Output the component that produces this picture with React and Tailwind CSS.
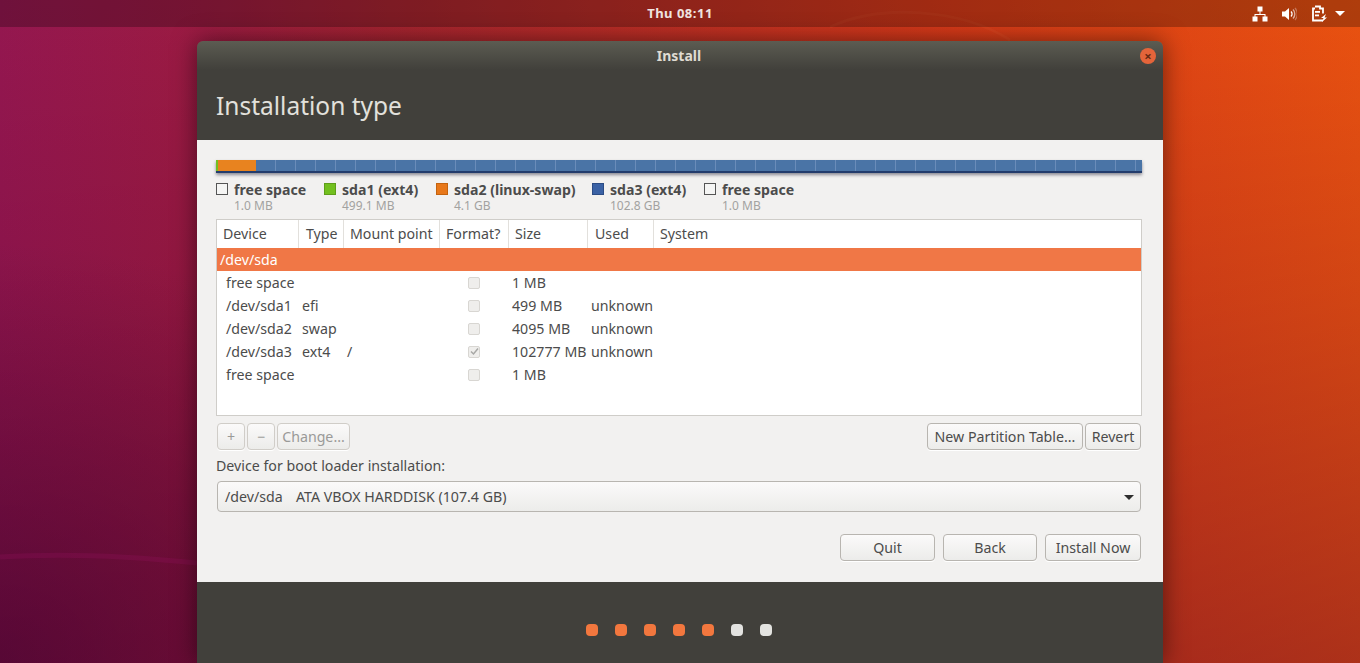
const legend = [
  { name: "free space", size: "1.0 MB", box: "bg-[#f5f5f4] border-[#555]", width: "w-[108px]" },
  { name: "sda1 (ext4)", size: "499.1 MB", box: "bg-[#73c01f] border-[#5f9e1a]", width: "w-[112px]" },
  { name: "sda2 (linux-swap)", size: "4.1 GB", box: "bg-[#e8781a] border-[#c4630f]", width: "w-[156px]" },
  { name: "sda3 (ext4)", size: "102.8 GB", box: "bg-[#3b62a5] border-[#2c4c85]", width: "w-[112px]" },
  { name: "free space", size: "1.0 MB", box: "bg-[#f5f5f4] border-[#555]", width: "w-[108px]" },
];

const columns = [
  { label: "Device", cls: "w-[82px] pl-[6px]" },
  { label: "Type", cls: "w-[45px] pl-[7px]" },
  { label: "Mount point", cls: "w-[96px] pl-[6px]" },
  { label: "Format?", cls: "w-[69px] pl-[6px]" },
  { label: "Size", cls: "w-[79px] pl-[6px]" },
  { label: "Used", cls: "w-[66px] pl-[7px]" },
  { label: "System", cls: "flex-1 pl-[6px]" },
];

const rows = [
  { device: "free space", size: "1 MB" },
  { device: "/dev/sda1", type: "efi", size: "499 MB", used: "unknown" },
  { device: "/dev/sda2", type: "swap", size: "4095 MB", used: "unknown" },
  { device: "/dev/sda3", type: "ext4", mount: "/", checked: true, size: "102777 MB", used: "unknown" },
  { device: "free space", size: "1 MB" },
];

function Btn({ children, className = "", disabled }) {
  return (
    <button
      className={`h-[27px] rounded-[4px] border border-[#b8b5b0] bg-gradient-to-b from-[#fbfafa] to-[#ececea] pt-[1px] text-[14.2px] leading-none shadow-[0_1px_0_#ffffff] ${
        disabled ? "border-[#d0cdc8] text-[#9a9a98]" : "text-[#4c4c4c]"
      } ${className}`}
    >
      {children}
    </button>
  );
}

function TopIcons() {
  return (
    <div className="flex items-center text-white">
      <svg width="16" height="16" viewBox="0 0 16 16" className="mr-[13px]" fill="#fff">
        <rect x="5.5" y="0.5" width="5" height="5" />
        <rect x="0.5" y="10.5" width="5" height="5" />
        <rect x="10.5" y="10.5" width="5" height="5" />
        <path d="M7.5 5h1v3H13.5v3h-1V9h-9v2h-1V8h5z" />
      </svg>
      <svg width="16" height="16" viewBox="0 0 16 16" className="mr-[14px]" fill="none">
        <path d="M1 5.5h3L8 2v12L4 10.5H1z" fill="#fff" />
        <path d="M10 5.5a3.5 3.5 0 0 1 0 5" stroke="#fff" strokeWidth="1.3" />
        <path d="M12 3.5a6.5 6.5 0 0 1 0 9" stroke="#fff" strokeOpacity="0.6" strokeWidth="1.3" />
        <path d="M14 2a9 9 0 0 1 0 12" stroke="#fff" strokeOpacity="0.3" strokeWidth="1.2" />
      </svg>
      <svg width="16" height="18" viewBox="0 0 16 18" className="mr-[8px]" fill="none">
        <path d="M4 1.5h5v2h3v5M12 15.5H2v-12h2" stroke="#fff" strokeWidth="1.8" />
        <rect x="4" y="6" width="5" height="1.8" fill="#fff" />
        <rect x="4" y="9.5" width="4" height="1.8" fill="#fff" />
        <path d="M10 13l5-4-1.5 3.5H16L11 17l1.5-4z" fill="#fff" />
      </svg>
      <span className="h-0 w-0 border-x-[5px] border-t-[5px] border-x-transparent border-t-white" />
    </div>
  );
}

export default function App() {
  return (
    <div className="relative flex h-[663px] w-[1360px] flex-col overflow-hidden bg-[radial-gradient(ellipse_520px_420px_at_0px_663px,rgba(45,0,40,0.45),rgba(45,0,40,0)),linear-gradient(180deg,rgba(80,0,40,0)_0%,rgba(80,0,40,0.16)_45%,rgba(80,0,40,0.4)_100%),linear-gradient(90deg,#951750_0%,#9c1b42_15%,#a8252f_30%,#d83a18_70%,#ea5210_100%)] font-['Noto_Sans',sans-serif]">
      {/* faint wave lines of the wallpaper */}
      <svg className="absolute inset-0" width="1360" height="663" fill="none">
        <path d="M0 557C60 553 130 556 197 563" stroke="#8f1058" strokeOpacity="0.3" strokeWidth="5" />
        <path d="M830 27C880 4 960 8 1010 40" stroke="#e8653a" strokeOpacity="0.15" strokeWidth="3" />
      </svg>

      <div className="relative flex h-[27px] shrink-0 items-center justify-between bg-black/25 pr-[15px] pl-[600px]">
        <span className="w-[160px] text-center text-[13px] font-bold tracking-[0.5px] text-[#f0e4e0]">Thu 08:11</span>
        <TopIcons />
      </div>

      <div className="relative flex flex-1 pt-[14px] pl-[197px]">
        <div className="flex w-[966px] flex-col rounded-t-[6px] shadow-[0_0_24px_rgba(0,0,0,0.5)]">
          <div className="relative flex h-[29px] shrink-0 items-center justify-center rounded-t-[6px] bg-gradient-to-b from-[#5c5c52] to-[#41403b] pr-[2px] text-[14px] font-bold text-[#dfdbd2]">
            Install
            <span className="absolute top-[7px] right-[7px] flex h-[16px] w-[16px] items-center justify-center rounded-full bg-[#e4643a] text-[13px] leading-none font-bold text-[#6a2a12]">
              ×
            </span>
          </div>

          <div className="flex h-[70px] shrink-0 items-center bg-[#41403b] pt-[3px] pl-[19px] text-[24.5px] text-[#e2e1dc]">
            Installation type
          </div>

          <div className="flex h-[442px] shrink-0 flex-col bg-[#f2f1f0] pt-[20px] pr-[21px] pl-[19px]">
            <div className="flex h-[13px] overflow-hidden border-b-2 border-[#233c6c] bg-[repeating-linear-gradient(90deg,#4a74a6_0px,#4a74a6_19px,#6a8cb9_19px,#6a8cb9_20px)] shadow-[0_2px_3px_rgba(40,40,60,0.5)]">
              <div className="w-[2px] bg-[#73c01f]" />
              <div className="w-[38px] bg-[#e8831f]" />
            </div>

            <div className="mt-[8px] flex">
              {legend.map((item, i) => (
                <div key={i} className={`flex ${item.width}`}>
                  <span className={`mt-[2px] h-[12px] w-[12px] border ${item.box}`} />
                  <div className="ml-[6px] leading-none">
                    <div className="h-[17px] text-[14.1px] leading-[17px] font-bold whitespace-nowrap text-[#4c4c4c]">{item.name}</div>
                    <div className="text-[12px] leading-[15px] text-[#a2a2a0]">{item.size}</div>
                  </div>
                </div>
              ))}
            </div>

            <div className="mt-[6px] flex h-[197px] shrink-0 flex-col border border-[#cfcdc9] bg-white text-[14.2px] text-[#4c4c4c]">
              <div className="flex h-[28px] shrink-0 items-center">
                {columns.map((col) => (
                  <div key={col.label} className={`flex h-full items-center border-r border-[#e2e0dc] last:border-r-0 ${col.cls}`}>
                    {col.label}
                  </div>
                ))}
              </div>
              <div className="flex h-[23px] shrink-0 items-center bg-[#f07746] pl-[3px] text-white">/dev/sda</div>
              {rows.map((row, i) => (
                <div key={i} className="flex h-[23px] shrink-0 items-center">
                  <div className="w-[85px] pl-[9px] whitespace-nowrap">{row.device}</div>
                  <div className="w-[45px]">{row.type}</div>
                  <div className="w-[121px]">{row.mount}</div>
                  <div className="w-[44px]">
                    <span className="flex h-[12px] w-[12px] items-center justify-center rounded-[2px] border border-[#d8d6d2] bg-[#efeeec]">
                      {row.checked && (
                        <svg width="9" height="9" viewBox="0 0 9 9" fill="none">
                          <path d="M1 4.5l2.5 2.5L8 1.5" stroke="#a8a8a6" strokeWidth="1.5" />
                        </svg>
                      )}
                    </span>
                  </div>
                  <div className="w-[79px] whitespace-nowrap">{row.size}</div>
                  <div>{row.used}</div>
                </div>
              ))}
            </div>

            <div className="mt-[7px] flex pl-px">
              <Btn disabled className="w-[28px] text-[#8c8c8a]">+</Btn>
              <Btn disabled className="ml-[2px] w-[28px] text-[#8c8c8a]">−</Btn>
              <Btn disabled className="ml-[2px] w-[73px]">Change...</Btn>
              <Btn className="ml-auto w-[156px] whitespace-nowrap">New Partition Table...</Btn>
              <Btn className="mr-px ml-[2px] w-[56px]">Revert</Btn>
            </div>

            <div className="mt-[7px] text-[14.2px] leading-[18px] text-[#4c4c4c]">Device for boot loader installation:</div>

            <div className="mt-[6px] mr-px ml-px flex h-[31px] items-center rounded-[4px] border border-[#b8b5b0] bg-gradient-to-b from-[#fbfafa] to-[#ececea] pr-[6px] pl-[7px] text-[14.2px] text-[#4c4c4c]">
              <span className="w-[71px]">/dev/sda</span>
              <span>ATA VBOX HARDDISK (107.4 GB)</span>
              <span className="mt-px ml-auto h-0 w-0 border-x-[5px] border-t-[5px] border-x-transparent border-t-[#2e2e2e]" />
            </div>

            <div className="mt-[22px] mr-px flex justify-end gap-[8px]">
              <Btn className="w-[95px]">Quit</Btn>
              <Btn className="w-[94px]">Back</Btn>
              <Btn className="w-[96px]">Install Now</Btn>
            </div>
          </div>

          <div className="flex flex-1 items-center justify-center gap-[17px] bg-[#41403b] pt-[15px] pr-[3px]">
            <span className="h-[12px] w-[12px] rounded-[4px] bg-[#f2773e]" />
            <span className="h-[12px] w-[12px] rounded-[4px] bg-[#f2773e]" />
            <span className="h-[12px] w-[12px] rounded-[4px] bg-[#f2773e]" />
            <span className="h-[12px] w-[12px] rounded-[4px] bg-[#f2773e]" />
            <span className="h-[12px] w-[12px] rounded-[4px] bg-[#f2773e]" />
            <span className="h-[12px] w-[12px] rounded-[4px] bg-[#e3e3e0]" />
            <span className="h-[12px] w-[12px] rounded-[4px] bg-[#e3e3e0]" />
          </div>
        </div>
      </div>
    </div>
  );
}
